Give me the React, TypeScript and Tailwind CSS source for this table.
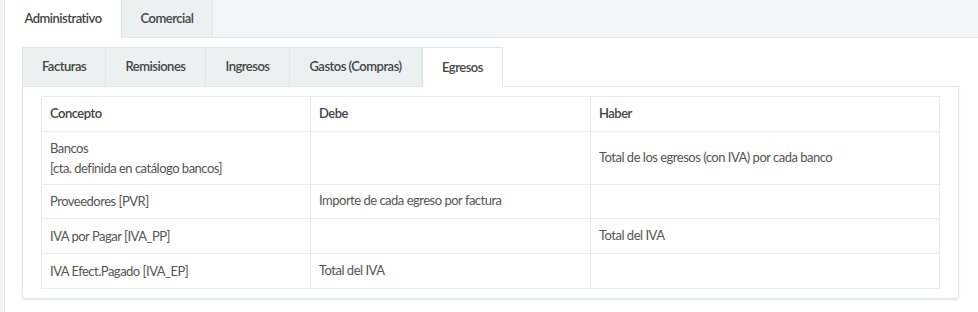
import React from "react";

const rows = [
  { c: ["Bancos", "[cta. definida en catálogo bancos]"], d: "", h: "Total de los egresos (con IVA) por cada banco" },
  { c: ["Proveedores [PVR]"], d: "Importe de cada egreso por factura", h: "" },
  { c: ["IVA por Pagar [IVA_PP]"], d: "", h: "Total del IVA" },
  { c: ["IVA Efect.Pagado [IVA_EP]"], d: "Total del IVA", h: "" },
];

export default function App() {
  const font = { fontFamily: "Lato, 'Open Sans', sans-serif" };
  return (
    <div className="w-[978px] h-[312px] bg-[#f3f6f9] text-[13px] tracking-[-0.5px] text-[#555]" style={font}>
      <div className="ml-[4px] h-full bg-white border-l border-[#e3e7ea] flex flex-col">
        <div className="flex h-[38px] bg-[#f4f5f8] border-b border-[#e4e7ea]">
          <div className="w-[116px] bg-white flex items-center justify-center font-semibold text-[#444] border-b border-white -mb-px">
            Administrativo
          </div>
          <div className="w-[92px] bg-[#ecf0f1] border-l border-r border-[#e0e5e8] flex items-center justify-center font-semibold text-[#444]">
            Comercial
          </div>
        </div>
        <div className="pl-[17px] pr-[19px] pt-[9px]">
          <div className="flex h-[40px]">
            {["Facturas", "Remisiones", "Ingresos", "Gastos (Compras)"].map((t, i) => (
              <div
                key={t}
                className={
                  "bg-[#ecf0f1] border border-[#dfe5e8] -ml-px first:ml-0 flex items-center justify-center font-semibold text-[#444] " +
                  (i === 0 ? "w-[84px]" : i === 1 ? "w-[101px]" : i === 2 ? "w-[85px]" : "w-[133px]")
                }
              >
                {t}
              </div>
            ))}
            <div className="w-[81px] bg-white border border-[#dfe5e8] border-b-white -mb-px relative z-10 flex items-center justify-center font-semibold text-[#444]">
              Egresos
            </div>
            <div className="flex-1 border-b border-[#dfe5e8]" />
          </div>
          <div className="border border-t-0 border-[#e3e8ea] rounded-b-[4px] shadow-[0_1px_2px_rgba(0,0,0,0.12)] px-[18px] pt-[9px] pb-[9px]">
            <table className="w-full border-collapse">
              <colgroup>
                <col className="w-[269px]" />
                <col className="w-[280px]" />
                <col />
              </colgroup>
              <thead>
                <tr className="h-[35px]">
                  {["Concepto", "Debe", "Haber"].map((h) => (
                    <th key={h} className="border border-[#e9ecee] px-[8px] text-left font-semibold text-[#444]">
                      {h}
                    </th>
                  ))}
                </tr>
              </thead>
              <tbody>
                {rows.map((r, i) => (
                  <tr key={i} className={r.c.length > 1 ? "h-[52.5px]" : i === 1 ? "h-[34px]" : "h-[35px]"}>
                    <td className="border border-[#e9ecee] px-[8px] leading-[20px] align-middle">
                      {r.c.map((l) => (
                        <div key={l}>{l}</div>
                      ))}
                    </td>
                    <td className="border border-[#e9ecee] px-[8px]">{r.d}</td>
                    <td className="border border-[#e9ecee] px-[8px]">{r.h}</td>
                  </tr>
                ))}
              </tbody>
            </table>
          </div>
        </div>
      </div>
    </div>
  );
}
